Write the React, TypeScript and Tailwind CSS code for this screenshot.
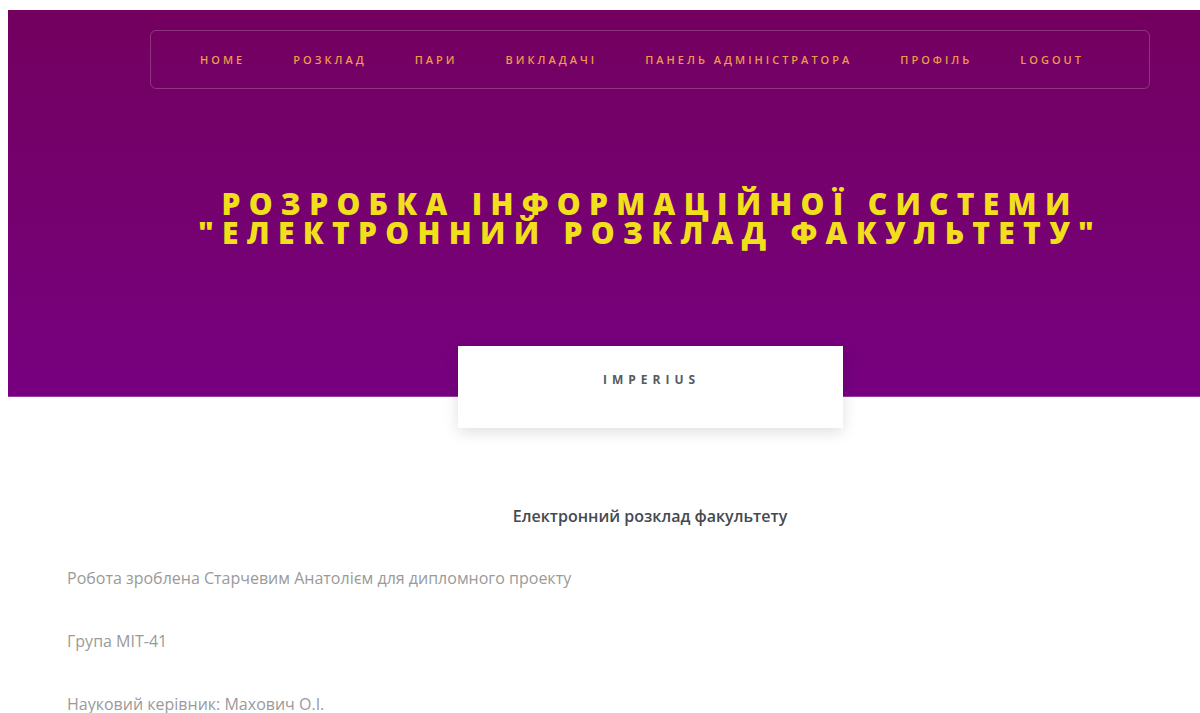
import React from "react";

const navItems = [
  "HOME",
  "РОЗКЛАД",
  "ПАРИ",
  "ВИКЛАДАЧІ",
  "ПАНЕЛЬ АДМІНІСТРАТОРА",
  "ПРОФІЛЬ",
  "LOGOUT",
];

export default function App() {
  return (
    <div
      className="min-h-[713px] bg-white pt-[10px] pl-[8px] overflow-hidden"
      style={{ fontFamily: '"Open Sans", "Noto Sans", sans-serif' }}
    >
      {/* Hero banner */}
      <header className="relative h-[387px] bg-gradient-to-b from-[#73005f] to-[#770080] border-b border-[#9a3aa0]">
        <div className="ml-[142px] w-[1000px] pt-[20px]">
          <nav className="h-[59px] rounded-[6px] border border-[#ffffff33] flex items-center justify-center gap-[48px] pr-[16px]">
            {navItems.map((item) => (
              <a
                key={item}
                className="text-[11px] font-semibold tracking-[3px] text-[#ec9a4c] leading-none"
              >
                {item}
              </a>
            ))}
          </nav>
          <h1 className="mt-[100px] text-center text-[30px] font-extrabold leading-[29px] tracking-[8.3px] text-[#f1df1c]">
            РОЗРОБКА ІНФОРМАЦІЙНОЇ СИСТЕМИ
            <br />
            "ЕЛЕКТРОННИЙ РОЗКЛАД ФАКУЛЬТЕТУ"
          </h1>
        </div>
        {/* Brand card overlapping the banner edge */}
        <div className="absolute left-[450px] top-[336px] w-[385px] h-[82px] bg-white shadow-[0_4px_14px_rgba(0,0,0,0.13)] flex justify-center pt-[25px]">
          <span className="text-[12px] font-bold tracking-[5px] text-[#555a60] pl-[2px]">
            IMPERIUS
          </span>
        </div>
      </header>

      {/* About section */}
      <main className="pt-[107px]">
        <h2 className="ml-[142px] w-[1000px] text-center text-[16px] font-semibold text-[#454950]">
          Електронний розклад факультету
        </h2>
        <div className="pl-[59px] text-[16px] text-[#9a9a9a] flex flex-col gap-[39px] mt-[38px]">
          <p>Робота зроблена Старчевим Анатолієм для дипломного проекту</p>
          <p>Група МІТ-41</p>
          <p>Науковий керівник: Махович О.І.</p>
        </div>
      </main>
    </div>
  );
}
